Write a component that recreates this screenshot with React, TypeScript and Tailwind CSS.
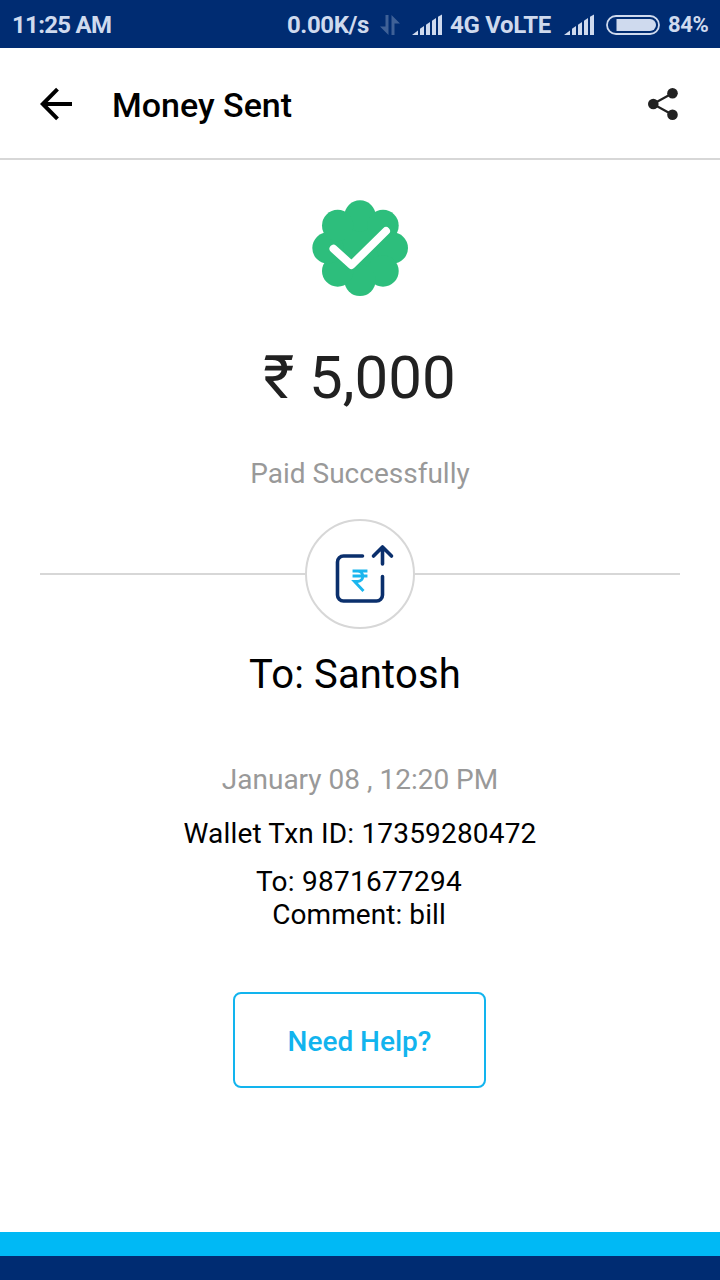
import type { ReactNode } from 'react'

interface DetailProps {
  className?: string
  children: ReactNode
}

function SignalIcon({ className = '' }: { className?: string }) {
  return (
    <svg className={`shrink-0 ${className}`} width="30" height="22" viewBox="0 0 30 22" fill="currentColor">
      <path d="M0 21 L6 16.600 V21Z" />
      <path d="M8 21V14.800L12 12.100V21Z" />
      <path d="M14 21V10.800L18 8V21Z" />
      <path d="M20 21V6.800L24 4V21Z" />
      <path d="M26 21V2.800L30 .4V21Z" />
    </svg>
  )
}

function DataIcon() {
  return (
    <svg className="ml-[11px] shrink-0" width="20" height="22" viewBox="0 0 20 22" fill="currentColor" opacity="0.3">
      <path d="M5.500 1H8.500V21L0 12.500H5.500Z" />
      <path d="M11.500 1L20 9.500H14.500V21H11.500Z" />
    </svg>
  )
}

function BatteryIcon() {
  return (
    <svg className="ml-3 shrink-0" width="54" height="20" viewBox="0 0 54 20" fill="none">
      <rect x="1" y="1" width="52" height="18" rx="9" stroke="currentColor" strokeWidth="1.800" />
      <path d="M10.500 4H44a6 6 0 0 1 0 12H10.500Z" fill="currentColor" />
    </svg>
  )
}

function StatusBar() {
  return (
    <div className="flex h-12 items-center bg-[#002c72] pl-3 pt-px text-2xl font-bold text-[#cfdaee]">
      <span className="w-[275px] shrink-0 whitespace-nowrap tracking-[-0.7px]">11:25 AM</span>
      <span className="w-[82px] shrink-0 whitespace-nowrap tracking-[-0.4px]">0.00K/s</span>
      <DataIcon />
      <SignalIcon className="ml-3" />
      <span className="ml-2 w-[102px] shrink-0 whitespace-nowrap tracking-[-0.3px]">4G VoLTE</span>
      <SignalIcon className="ml-3" />
      <BatteryIcon />
      <span className="ml-2 whitespace-nowrap text-[22px] tracking-[-0.4px]">84%</span>
    </div>
  )
}

function Header() {
  return (
    <header className="flex h-28 items-center border-b-2 border-[#d7d7d7] pl-10 pr-[42px]">
      <svg className="mt-0.5" width="33" height="34" viewBox="0 0 33 34" fill="none" stroke="#000" strokeWidth="4">
        <path d="M32 17H3M17.500 2.200L2.800 17L17.500 31.800" />
      </svg>
      <h1 className="ml-[39px] flex-1 pt-[3px] text-[34px] leading-10 font-medium text-black">Money Sent</h1>
      <svg className="mt-0.5" width="30" height="32" viewBox="0 0 30 32" fill="#212121">
        <path d="M24.500 5.300L5 16L24.500 26.700" fill="none" stroke="#212121" strokeWidth="2.200" />
        <circle cx="24.500" cy="5.300" r="5.300" />
        <circle cx="5.300" cy="16" r="5.300" />
        <circle cx="24.500" cy="26.700" r="5.300" />
      </svg>
    </header>
  )
}

function SuccessBadge() {
  return (
    <svg className="mt-10" width="96" height="96" viewBox="0 0 96 96" fill="#2dbe7c">
      <circle cx="48" cy="48" r="36" />
      <circle cx="48" cy="16" r="15.700" />
      <circle cx="71" cy="25.500" r="15.700" />
      <circle cx="80.300" cy="48" r="15.700" />
      <circle cx="71" cy="71" r="15.700" />
      <circle cx="48" cy="80.300" r="15.700" />
      <circle cx="25.700" cy="71" r="15.700" />
      <circle cx="16" cy="48" r="15.700" />
      <circle cx="25.700" cy="25.500" r="15.700" />
      <path
        d="M21.500 48.800L39.500 65L74 31"
        fill="none"
        stroke="#fff"
        strokeWidth="8"
        strokeLinecap="round"
        strokeLinejoin="round"
      />
    </svg>
  )
}

function TransferDivider() {
  return (
    <div className="mt-[29px] flex w-full items-center px-10">
      <div className="h-0.5 flex-1 bg-[#d7d7d7]" />
      <div className="size-[110px] rounded-full border-2 border-[#d7d7d7]">
        <svg width="106" height="106" viewBox="0 0 106 106" fill="none" strokeLinecap="round" strokeLinejoin="round">
          <g stroke="#0a2f6c" strokeWidth="3.600">
            <path d="M55.500 35H36.500a6 6 0 0 0-6 6V74a6 6 0 0 0 6 6H69.500a6 6 0 0 0 6-6V55.500" />
            <path d="M75.500 43V26.500M66.500 35L75.500 26L84.500 35" />
          </g>
          <path
            d="M47 50H59M47 55H59M47 50H50.500C57.500 50 57.500 60.500 50.500 60.500H47.500L55.500 69"
            stroke="#1bb6ee"
            strokeWidth="2.900"
            strokeLinecap="square"
            strokeLinejoin="miter"
          />
        </svg>
      </div>
      <div className="h-0.5 flex-1 bg-[#d7d7d7]" />
    </div>
  )
}

function Detail({ className = '', children }: DetailProps) {
  return <p className={`text-[28px] leading-[33px] text-black ${className}`}>{children}</p>
}

export default function App() {
  return (
    <div className="flex h-[1280px] w-[720px] flex-col overflow-hidden bg-white font-['Roboto',sans-serif]">
      <StatusBar />
      <Header />

      <main className="flex flex-1 flex-col items-center">
        <SuccessBadge />
        <p className="mt-[42px] pr-px text-[60px] leading-[80px] text-[#212121]">₹ 5,000</p>
        <p className="mt-10 text-[28px] leading-8 text-[#999]">Paid Successfully</p>

        <TransferDivider />

        <h2 className="mt-[22px] pr-2.5 text-[40px] leading-[48px] tracking-[0.15px] text-black">To: Santosh</h2>
        <p className="mt-[65px] text-[28px] leading-8 text-[#999]">January 08 , 12:20 PM</p>
        <Detail className="mt-[21px] tracking-[0.18px]">Wallet Txn ID: 17359280472</Detail>
        <Detail className="mt-[15px] pr-0.5 tracking-[0.27px]">To: 9871677294</Detail>
        <Detail className="pr-0.5 tracking-[0.08px]">Comment: bill</Detail>

        <button className="mt-[61px] mr-px h-24 w-[253px] rounded-lg border-2 border-[#12b4ee] pt-1 text-[28px] font-medium text-[#12b4ee]">
          Need Help?
        </button>
      </main>

      <footer className="h-12 border-t-[24px] border-[#00b9f5] bg-[#002c72]" />
    </div>
  )
}
